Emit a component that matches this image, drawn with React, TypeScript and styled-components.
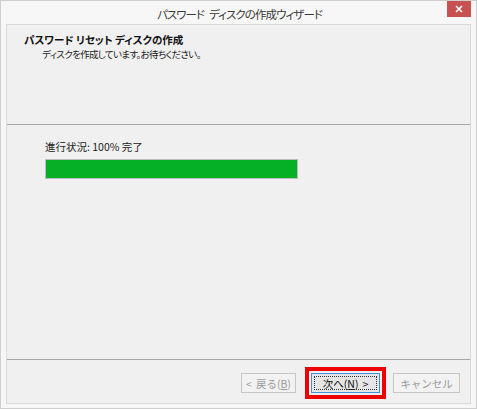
import React from "react";
import styled, { createGlobalStyle } from "styled-components";

const Global = createGlobalStyle`
  html, body { margin: 0; padding: 0; background: #ffffff; }
  * { box-sizing: border-box; }
  body { font-family: "Noto Sans CJK JP", "Noto Sans", sans-serif; }
`;

const Window = styled.div`
  width: 477px;
  height: 409px;
  border: 1px solid #cfcfcf;
  background: #f7f7f7;
  display: flex;
  flex-direction: column;
  position: relative;
`;

const TitleBar = styled.div`
  height: 23px;
  flex: none;
  display: flex;
  align-items: center;
  justify-content: center;
  position: relative;
`;

const Title = styled.div`
  font-size: 11.5px;
  color: #3a3a3a;
  font-feature-settings: "palt";
  letter-spacing: -0.95px;
  padding-top: 2px;
  padding-left: 2px;
`;

const Gap = styled.span<{ $w: number }>`
  display: inline-block;
  width: ${(p) => p.$w}px;
`;

const CloseButton = styled.div`
  position: absolute;
  top: 0;
  right: 5px;
  width: 24px;
  height: 16px;
  background: #c75050;
  color: #fff;
  display: flex;
  align-items: center;
  justify-content: center;
`;

const Panel = styled.div`
  flex: 1;
  margin: 0 5px 4px 5px;
  border: 1px solid #d9d9d9;
  background: #f0f0f0;
  display: flex;
  flex-direction: column;
`;

const Header = styled.div`
  height: 100px;
  flex: none;
  border-bottom: 1px solid #a8a8a8;
  padding: 7px 0 0 17px;
  display: flex;
  flex-direction: column;
`;

const HeaderTitle = styled.div`
  font-size: 10.5px;
  font-weight: 700;
  color: #111;
  font-feature-settings: "palt";
  line-height: 15px;
`;

const HeaderSub = styled.div`
  font-size: 9.5px;
  color: #222;
  font-feature-settings: "palt";
  letter-spacing: -0.65px;
  line-height: 14px;
  padding-left: 18px;
`;

const Body = styled.div`
  flex: 1;
  padding: 15px 0 0 38px;
  display: flex;
  flex-direction: column;
  gap: 5px;
`;

const Label = styled.div`
  font-size: 10.5px;
  color: #222;
  line-height: 14px;
  font-feature-settings: "palt";
`;

const Progress = styled.div`
  width: 253px;
  height: 20px;
  border: 1px solid #bcbcbc;
  background: #e6e6e6;
`;

const ProgressFill = styled.div`
  height: 100%;
  background: #06b025;
`;

const Footer = styled.div`
  height: 44px;
  flex: none;
  border-top: 1px solid #a8a8a8;
  display: flex;
  justify-content: flex-end;
  align-items: flex-start;
  padding: 13px 10px 0 0;
`;

const Button = styled.div<{ $w: number; $primary?: boolean; $disabled?: boolean; $gap?: number }>`
  width: ${(p) => p.$w}px;
  height: 20px;
  margin-left: ${(p) => p.$gap ?? 0}px;
  display: flex;
  align-items: center;
  justify-content: center;
  font-size: 10.5px;
  color: ${(p) => (p.$disabled ? "#9a9a9a" : "#111")};
  background: ${(p) => (p.$primary ? "#e6e6e6" : "#f2f2f2")};
  border: 1px solid ${(p) => (p.$primary ? "#3c8fe0" : "#c6c6c6")};
  position: relative;
  ${(p) =>
    p.$primary
      ? `
    outline: 4px solid #ee0000;
    outline-offset: 2px;
    &::after {
      content: "";
      position: absolute;
      inset: 2px;
      border: 1px dotted #333;
    }
  `
      : ""}
`;

const U = styled.span`
  text-decoration: underline;
`;

export default function App() {
  return (
    <>
      <Global />
      <Window>
        <TitleBar>
          <Title>
            パスワード<Gap $w={5} />ディスクの作成ウィザード
          </Title>
          <CloseButton>
            <svg width="8" height="8" viewBox="0 0 8 8">
              <path d="M1 1 L7 7 M7 1 L1 7" stroke="#fff" strokeWidth="1.6" />
            </svg>
          </CloseButton>
        </TitleBar>
        <Panel>
          <Header>
            <HeaderTitle>パスワード リセット ディスクの作成</HeaderTitle>
            <HeaderSub>ディスクを作成しています。お待ちください。</HeaderSub>
          </Header>
          <Body>
            <Label>進行状況: 100% 完了</Label>
            <Progress>
              <ProgressFill style={{ width: "100%" }} />
            </Progress>
          </Body>
          <Footer>
            <Button $w={55} $disabled>
              &lt;<Gap $w={4} />戻る(<U>B</U>)
            </Button>
            <Button $w={69} $primary $gap={15}>
              次へ(<U>N</U>)<Gap $w={4} />&gt;
            </Button>
            <Button $w={67} $disabled $gap={13}>
              キャンセル
            </Button>
          </Footer>
        </Panel>
      </Window>
    </>
  );
}
